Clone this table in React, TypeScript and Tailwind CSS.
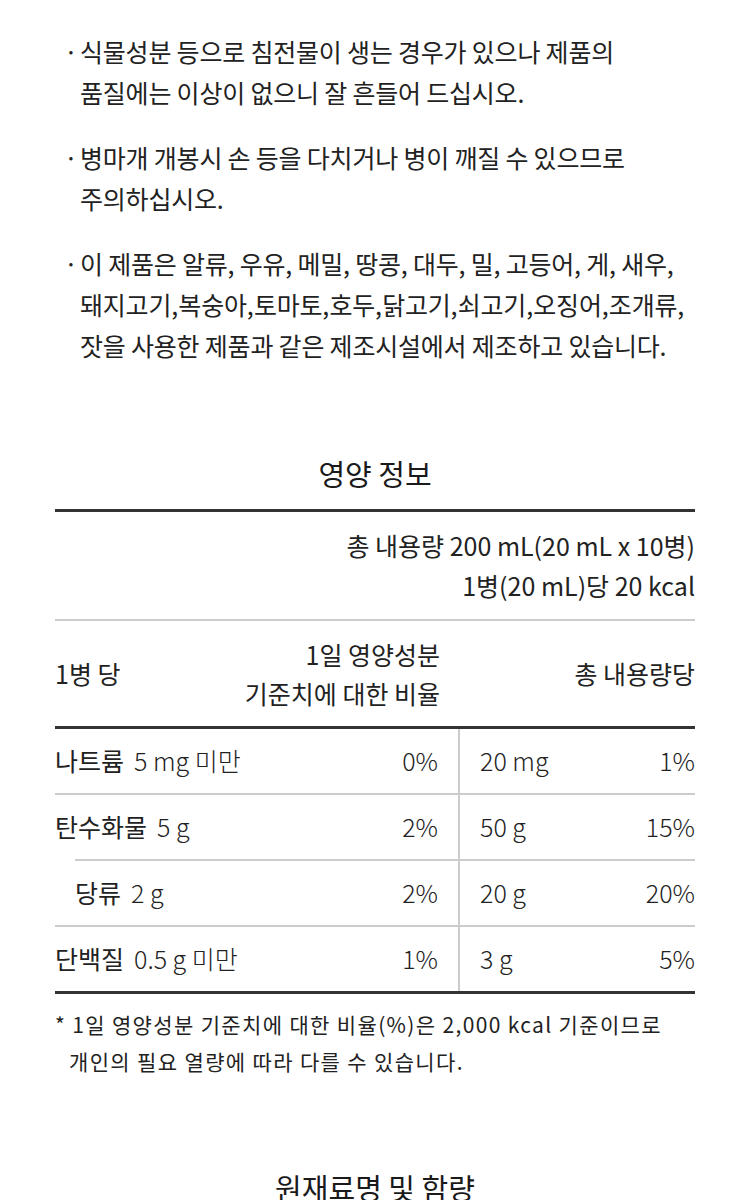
import clsx from "clsx";

const NOTES = [
  ["식물성분 등으로 침전물이 생는 경우가 있으나 제품의", "품질에는 이상이 없으니 잘 흔들어 드십시오."],
  ["병마개 개봉시 손 등을 다치거나 병이 깨질 수 있으므로", "주의하십시오."],
  [
    "이 제품은 알류, 우유, 메밀, 땅콩, 대두, 밀, 고등어, 게, 새우,",
    "돼지고기, 복숭아, 토마토, 호두, 닭고기, 쇠고기, 오징어, 조개류,",
    "잣을 사용한 제품과 같은 제조시설에서 제조하고 있습니다.",
  ],
];

const ROWS = [
  { name: "나트륨", amount: "5 mg 미만", pct: "0%", total: "20 mg", totalPct: "1%" },
  { name: "탄수화물", amount: "5 g", pct: "2%", total: "50 g", totalPct: "15%" },
  { name: "당류", amount: "2 g", pct: "2%", total: "20 g", totalPct: "20%", sub: true },
  { name: "단백질", amount: "0.5 g 미만", pct: "1%", total: "3 g", totalPct: "5%" },
];

const App = () => {
  return (
    <div className="min-h-[1200px] w-full overflow-hidden bg-white font-['Noto_Sans_CJK_KR','Noto_Sans',sans-serif] text-[#222]">
      {/* 주의사항 */}
      <ul className="flex flex-col gap-[24px] pl-[64px] pr-[20px] pt-[31px]">
        {NOTES.map((lines, i) => (
          <li key={i} className="flex text-[25px] leading-[41px]">
            <span className="w-[16px] shrink-0">·</span>
            <p className="whitespace-nowrap tracking-[-0.2px]">
              {lines.map((line, j) => (
                <span
                  key={j}
                  className={clsx("block", line.startsWith("돼지고기") && "[word-spacing:-5px]")}
                >
                  {line}
                </span>
              ))}
            </p>
          </li>
        ))}
      </ul>

      {/* 영양 정보 */}
      <h2 className="mt-[87px] text-center text-[29px] leading-[40px] text-[#1a1a1a]">
        영양 정보
      </h2>

      <div className="mx-[55px] mt-[16px] border-t-[3px] border-[#333]">
        <div className="border-b-2 border-[#ccc] pb-[14px] pt-[13px] text-right text-[25px] leading-[40px]">
          <p>총 내용량 200 mL(20 mL x 10병)</p>
          <p>1병(20 mL)당 20 kcal</p>
        </div>

        <div className="flex h-[105px] items-center text-[25px]">
          <div className="flex w-[405px] items-center justify-between pr-[20px]">
            <span>1병 당</span>
            <p className="text-right leading-[39px]">
              1일 영양성분
              <br />
              기준치에 대한 비율
            </p>
          </div>
          <div className="flex-1 text-right">총 내용량당</div>
        </div>

        <div className="border-y-[3px] border-[#333] text-[25px]">
          {ROWS.map((row, i) => (
            <div key={row.name} className="flex">
              <div
                className={clsx(
                  "w-[405px] shrink-0 border-r-2 border-[#ccc]",
                  row.sub && "pl-[20px]"
                )}
              >
                <div
                  className={clsx(
                    "flex items-center justify-between pr-[20px]",
                    i > 0 ? "h-[66px] border-t-2 border-[#ccc]" : "h-[64px]"
                  )}
                >
                  <span>
                    {row.name}
                    <span className="ml-[10px] font-light">{row.amount}</span>
                  </span>
                  <span className="font-light">{row.pct}</span>
                </div>
              </div>
              <div
                className={clsx(
                  "flex flex-1 items-center justify-between pl-[20px] font-light",
                  i > 0 ? "h-[66px] border-t-2 border-[#ccc]" : "h-[64px]"
                )}
              >
                <span>{row.total}</span>
                <span>{row.totalPct}</span>
              </div>
            </div>
          ))}
        </div>

        <p className="mt-[12px] text-[21px] leading-[37px] tracking-[1.35px]">
          * 1일 영양성분 기준치에 대한 비율(%)은 2,000 kcal 기준이므로
          <br />
          <span className="pl-[14px]">개인의 필요 열량에 따라 다를 수 있습니다.</span>
        </p>
      </div>

      {/* 원재료명 및 함량 */}
      <h2 className="mt-[87px] text-center text-[29px] leading-[40px] text-[#1a1a1a]">
        원재료명 및 함량
      </h2>
    </div>
  );
};

export default App;
